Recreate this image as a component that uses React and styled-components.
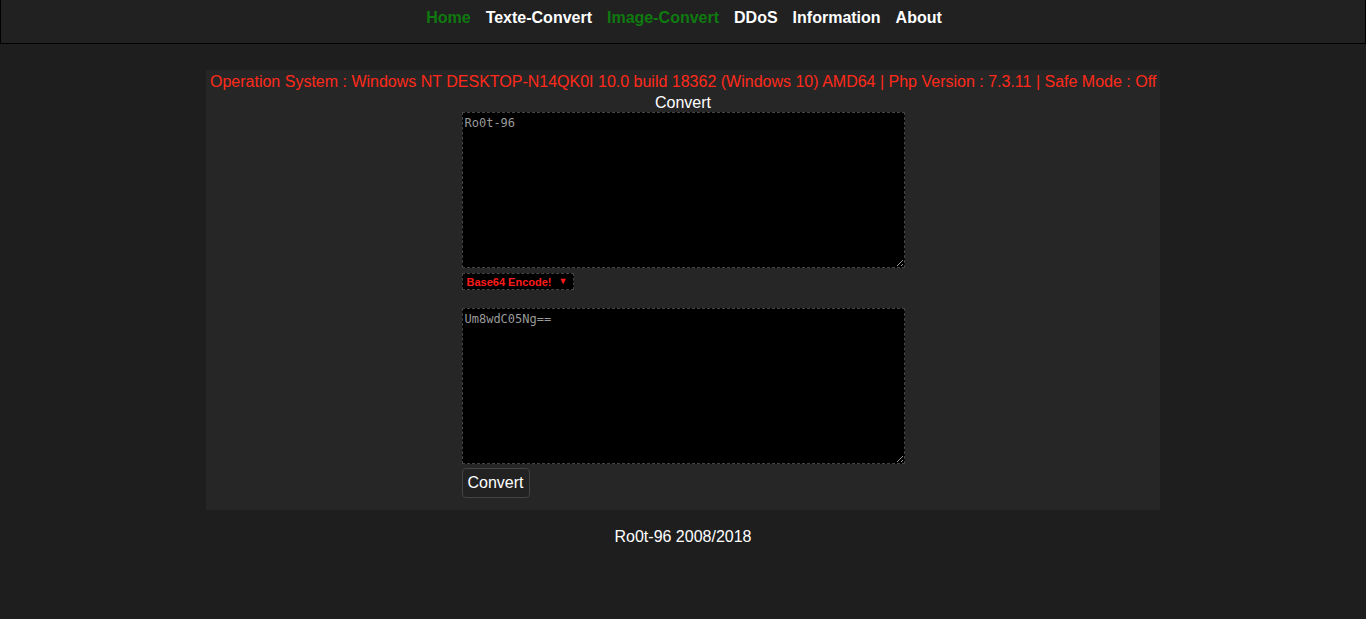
import React, { useState } from 'react';
import styled, { createGlobalStyle } from 'styled-components';

const GlobalStyle = createGlobalStyle`
  html, body {
    margin: 0;
    padding: 0;
    background: #1e1e1e;
    font-family: "Liberation Sans", Arial, sans-serif;
    color: #fff;
  }
`;

const links = [
  { label: 'Home', active: true },
  { label: 'Texte-Convert' },
  { label: 'Image-Convert', active: true },
  { label: 'DDoS' },
  { label: 'Information' },
  { label: 'About' },
];

function App() {
  const [input, setInput] = useState('Ro0t-96');
  const [output, setOutput] = useState('Um8wdC05Ng==');

  const handleConvert = () => {
    try {
      setOutput(btoa(input));
    } catch (e) {
      setOutput('');
    }
  };

  return (
    <>
      <GlobalStyle />
      <Header>
        <Nav>
          {links.map((l) => (
            <NavLink key={l.label} href="#" $active={l.active}>
              {l.label}
            </NavLink>
          ))}
        </Nav>
      </Header>

      <Panel>
        <SysInfo>
          Operation System : Windows NT DESKTOP-N14QK0I 10.0 build 18362 (Windows 10) AMD64 | Php Version : 7.3.11 | Safe Mode : Off
        </SysInfo>
        <PanelTitle>Convert</PanelTitle>
        <Form>
          <TextArea value={input} onChange={(e) => setInput(e.target.value)} />
          <Dropdown>
            Base64 Encode!
            <Arrow>▼</Arrow>
          </Dropdown>
          <TextArea $gap value={output} onChange={(e) => setOutput(e.target.value)} spellCheck={false} />
          <Button onClick={handleConvert}>Convert</Button>
        </Form>
      </Panel>

      <Footer>Ro0t-96 2008/2018</Footer>
    </>
  );
}

const Header = styled.div`
  height: 43px;
  background: #212121;
  border: 1px solid #000;
  border-top: none;
  box-sizing: content-box;
`;

const Nav = styled.nav`
  display: flex;
  justify-content: center;
  gap: 15px;
  padding-top: 9px;
  padding-left: 2px;
`;

const NavLink = styled.a`
  font-weight: bold;
  font-size: 16px;
  text-decoration: none;
  color: ${(p) => (p.$active ? '#0f7a0f' : '#ffffff')};
`;

const Panel = styled.div`
  width: 954px;
  margin: 26px auto 0;
  padding: 3px 0 12px;
  background: #262626;
  display: flex;
  flex-direction: column;
  align-items: center;
`;

const SysInfo = styled.div`
  align-self: stretch;
  padding-left: 4px;
  color: #ff2a1a;
  font-size: 16px;
  line-height: 18px;
`;

const PanelTitle = styled.div`
  font-size: 16px;
  line-height: 18px;
  margin-top: 3px;
  margin-bottom: 0;
`;

const Form = styled.div`
  width: 443px;
  display: flex;
  flex-direction: column;
  align-items: flex-start;
`;

const TextArea = styled.textarea`
  width: 443px;
  height: 156px;
  box-sizing: border-box;
  margin-top: ${(p) => (p.$gap ? '18px' : '0')};
  background: #000;
  color: #9a9a9a;
  border: 1px dashed #444;
  font-family: "DejaVu Sans Mono", "Liberation Mono", monospace;
  font-size: 12px;
  line-height: 15px;
  padding: 3px 2px;
  outline: none;
`;

const Dropdown = styled.div`
  margin-top: 5px;
  height: 17px;
  box-sizing: border-box;
  display: flex;
  align-items: center;
  gap: 7px;
  padding: 0 6px 0 4px;
  background: #000;
  border: 1px dashed #444;
  color: #ff1a1a;
  font-size: 11px;
  font-weight: bold;
  font-family: "Liberation Sans", Arial, sans-serif;
`;

const Arrow = styled.span`
  font-size: 9px;
  margin-top: -2px;
`;

const Button = styled.button`
  margin-top: 4px;
  height: 30px;
  padding: 0 5px;
  background: #222;
  color: #fff;
  border: 1px solid #444;
  border-radius: 4px;
  font-family: "Liberation Sans", Arial, sans-serif;
  font-size: 16px;
  cursor: pointer;
`;

const Footer = styled.div`
  text-align: center;
  font-size: 16px;
  margin-top: 18px;
`;

export default App;
